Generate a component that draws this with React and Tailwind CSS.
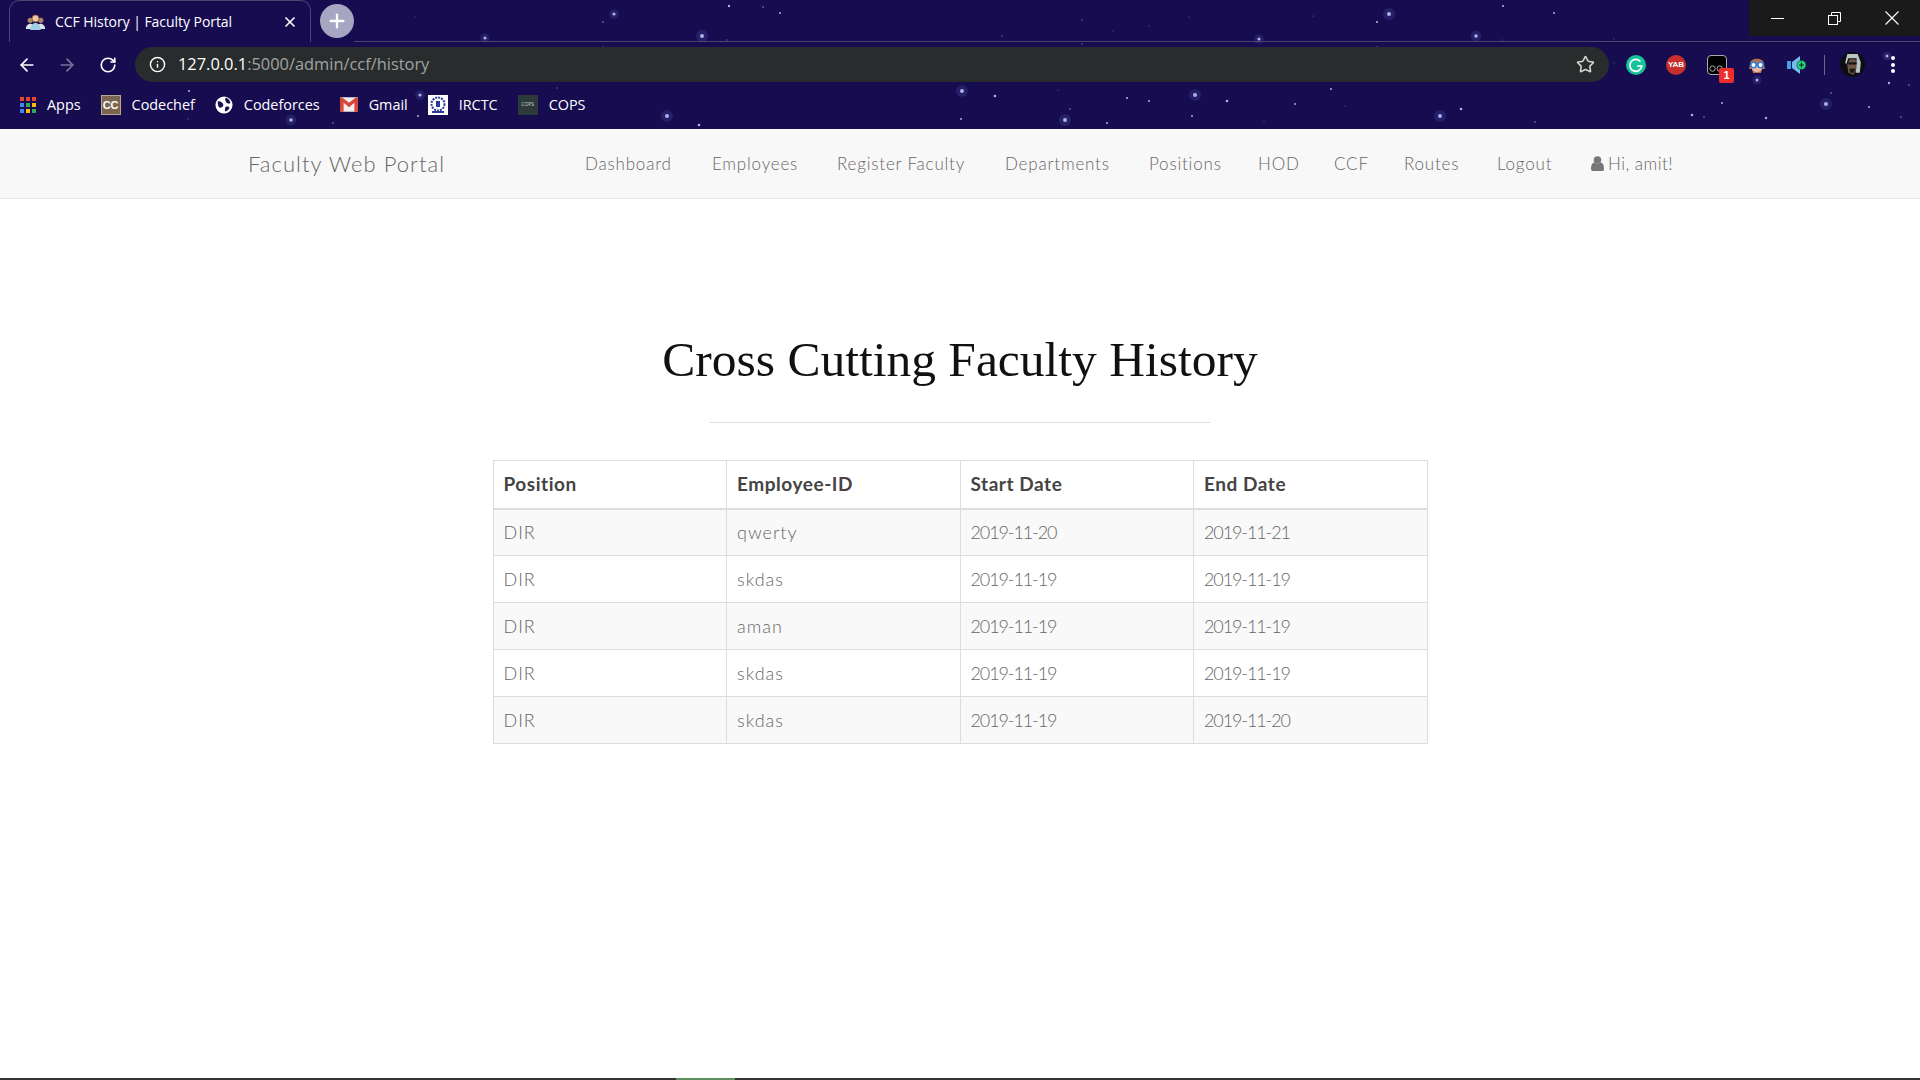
import { ArrowLeft, ArrowRight, RotateCw, Info, Star, X, Plus } from "lucide-react";

// [x, y, size] -- size 2 gets a glow
const stars = [
  [729, 6, 1.2], [763, 7, 0.9], [780, 13, 1], [702, 36, 2], [727, 40, 0.7], [1002, 36, 0.7], [1082, 20, 0.7], [1113, 31, 0.6],
  [1149, 26, 0.6], [1189, 17, 0.6], [1082, 44, 0.7], [962, 91, 2], [995, 96, 1.3], [1058, 90, 0.6], [1127, 98, 1.1], [1149, 101, 1],
  [1195, 95, 2], [667, 116, 2], [699, 125, 1.3], [961, 119, 1], [1065, 120, 2], [1070, 109, 0.9], [1107, 123, 1], [1192, 116, 1],
  [1389, 14, 2], [1377, 22, 1.1], [1313, 16, 0.6], [1503, 6, 1.1], [1554, 13, 1], [1259, 39, 1.6], [1476, 36, 1.8], [1377, 47, 0.8],
  [1502, 40, 0.6], [1614, 39, 0.6], [1614, 63, 0.6], [1331, 89, 1], [1227, 101, 1.3], [1295, 104, 1], [1345, 106, 0.6], [1440, 116, 2],
  [1461, 109, 1.3], [1264, 121, 0.6], [1535, 122, 0.9], [1692, 115, 1.3], [1704, 117, 0.9], [1722, 103, 1], [1757, 80, 1.5],
  [1887, 56, 1.5], [1889, 83, 1.2], [1909, 85, 0.9], [1831, 93, 0.9], [1826, 104, 2], [1869, 107, 1], [1901, 117, 0.9], [1766, 118, 1.2],
  [614, 14, 1.6], [603, 22, 0.9], [485, 38, 1.5], [415, 17, 0.6], [189, 91, 1.1], [420, 95, 1.6], [557, 88, 0.7], [291, 120, 1.8],
  [188, 119, 0.7], [333, 123, 0.9], [418, 116, 1], [603, 47, 0.7],
];

const bookmarks = ["Apps", "Codechef", "Codeforces", "Gmail", "IRCTC", "COPS"];

const navLinks = [
  ["Dashboard", "w-[127px]"],
  ["Employees", "w-[125px]"],
  ["Register Faculty", "w-[168px]"],
  ["Departments", "w-[144px]"],
  ["Positions", "w-[109px]"],
  ["HOD", "w-[76px]"],
  ["CCF", "w-[70px]"],
  ["Routes", "w-[93px]"],
  ["Logout", "w-[94px]"],
];

const rows = [
  ["DIR", "qwerty", "2019-11-20", "2019-11-21"],
  ["DIR", "skdas", "2019-11-19", "2019-11-19"],
  ["DIR", "aman", "2019-11-19", "2019-11-19"],
  ["DIR", "skdas", "2019-11-19", "2019-11-19"],
  ["DIR", "skdas", "2019-11-19", "2019-11-20"],
];

function BookmarkIcon({ label }) {
  if (label === "Apps") {
    const colors = ["#ea4335", "#ea4335", "#ea4335", "#4285f4", "#34a853", "#fbbc05", "#4285f4", "#fbbc05", "#34a853"];
    return (
      <svg viewBox="0 0 16 16" className="w-[16px] h-[16px]">
        {colors.map((c, i) => (
          <rect key={i} x={(i % 3) * 6} y={Math.floor(i / 3) * 6} width="4" height="4" fill={c} />
        ))}
      </svg>
    );
  }
  if (label === "Codechef") {
    return (
      <div className="w-[20px] h-[20px] bg-[#7a6650] flex items-center justify-center text-[11px] font-bold text-white border border-[#b8a78f] font-['Liberation_Sans',sans-serif]">
        CC
      </div>
    );
  }
  if (label === "Codeforces") {
    return (
      <svg viewBox="0 0 20 20" className="w-[18px] h-[18px]">
        <circle cx="10" cy="10" r="9.5" fill="#fff" />
        <path d="M3 6c3-1 5 1 6 3s-1 4-3 4-3-3-3-7zM12 2c3 1 5 3 5 6-2 1-4 0-5-2s-1-3 0-4zM12 12c2-1 4 0 4 1-1 3-3 4-5 4 0-2 0-4 1-5z" fill="#1a1050" />
      </svg>
    );
  }
  if (label === "Gmail") {
    return (
      <svg viewBox="0 0 20 16" className="w-[18px] h-[15px]">
        <rect width="20" height="16" rx="1" fill="#f1eeee" />
        <path d="M0 1v15h4V6l6 5 6-5v10h4V1l-2-1-8 6-8-6z" fill="#d8463a" />
      </svg>
    );
  }
  if (label === "IRCTC") {
    return (
      <svg viewBox="0 0 20 20" className="w-[20px] h-[20px]">
        <rect width="20" height="20" fill="#fff" />
        <circle cx="10" cy="9" r="6.5" fill="none" stroke="#2b3a9b" strokeWidth="2" strokeDasharray="2 1" />
        <rect x="8" y="6" width="4" height="6" fill="#2b3a9b" />
        <rect x="4" y="16" width="12" height="2" fill="#2b3a9b" />
      </svg>
    );
  }
  return (
    <div className="w-[20px] h-[20px] bg-[#2c3a3a] flex items-center justify-center text-[5px] text-gray-300">
      COPS
    </div>
  );
}

function ExtensionIcons() {
  return (
    <div className="flex items-center ml-[17px]">
      <svg viewBox="0 0 20 20" className="w-[20px] h-[20px]">
        <circle cx="10" cy="10" r="10" fill="#15c39a" />
        <path d="M14.5 6.5A6 6 0 1 0 15.8 11H11" fill="none" stroke="#fff" strokeWidth="1.7" />
      </svg>
      <div className="ml-[20px] w-[20px] h-[20px] rounded-full bg-[#c62f2b] flex items-center justify-center text-[8px] font-bold text-white font-['Liberation_Sans',sans-serif]">
        YAB
      </div>
      <div className="ml-[21px] relative w-[20px] h-[20px] rounded-[4px] bg-black border border-[#aaa]">
        <svg viewBox="0 0 20 20" className="absolute inset-0">
          <circle cx="5" cy="14" r="3" fill="none" stroke="#bbb" strokeWidth="1" />
          <circle cx="13" cy="14" r="3" fill="none" stroke="#bbb" strokeWidth="1" />
        </svg>
        <div className="absolute left-[11px] top-[12px] w-[15px] h-[15px] bg-[#ee2d2d] rounded-[2px] flex items-center justify-center text-[11px] font-bold text-white font-['Liberation_Sans',sans-serif]">
          1
        </div>
      </div>
      <svg viewBox="0 0 20 20" className="ml-[20px] w-[20px] h-[22px]">
        <path d="M3 9C3 2 17 2 17 9l1 5-3 0-1 4H6l-1-4-3 0z" fill="#b5714b" />
        <path d="M5 11h10v3c-1 4-9 4-10 0z" fill="#f2b9a0" />
        <circle cx="6.5" cy="10" r="2.7" fill="#fff" stroke="#2f80d8" strokeWidth="1.6" />
        <circle cx="13.5" cy="10" r="2.7" fill="#fff" stroke="#2f80d8" strokeWidth="1.6" />
      </svg>
      <svg viewBox="0 0 20 20" className="ml-[20px] w-[20px] h-[20px]">
        <rect x="0" y="6" width="4" height="8" fill="#39a3e6" />
        <path d="M5 7l8-6v18l-8-6z" fill="#6fbde8" />
        <circle cx="14.5" cy="10" r="4.5" fill="#22dd77" stroke="#123" strokeWidth="0.6" />
        <path d="M12 10h5M14.5 7.5v5" stroke="#123" strokeWidth="1.2" />
      </svg>
      <div className="ml-[17px] w-px h-[20px] bg-[#6b6788]" />
      <svg viewBox="0 0 24 24" className="ml-[15px] w-[25px] h-[25px]">
        <circle cx="12" cy="12" r="12" fill="#0c0c14" />
        <path d="M7 2h10l3 8-1 10H15l1-14H8l-2 6-1-2z" fill="#b9c6c4" />
        <path d="M9 7h6l1 8-3 7-5-2-1-7z" fill="#6d5546" />
        <rect x="8" y="10" width="8" height="2" fill="#111" />
        <path d="M9 16h6l-2 4h-3z" fill="#1c1612" />
      </svg>
      <div className="ml-[26px] flex flex-col gap-[2.5px]">
        <div className="w-[4px] h-[4px] rounded-full bg-white" />
        <div className="w-[4px] h-[4px] rounded-full bg-white" />
        <div className="w-[4px] h-[4px] rounded-full bg-white" />
      </div>
    </div>
  );
}

function WindowControls() {
  return (
    <div className="absolute right-0 top-0 flex h-[36px] w-[171px] bg-[#1a1a1a] text-white">
      <div className="flex-1 flex items-center justify-center">
        <svg width="13" height="1"><rect width="13" height="1" fill="#fff" /></svg>
      </div>
      <div className="w-[58px] flex items-center justify-center">
        <svg width="13" height="13" fill="none" stroke="#fff">
          <path d="M3.5 3V.5h9v9H10" />
          <rect x=".5" y="3.5" width="9" height="9" />
        </svg>
      </div>
      <div className="flex-1 flex items-center justify-center">
        <svg width="14" height="14" stroke="#fff" strokeWidth="1.1">
          <path d="M.5.5l13 13M13.5.5l-13 13" />
        </svg>
      </div>
    </div>
  );
}

function BrowserChrome() {
  return (
    <div className="relative h-[129px] bg-[#170c50] text-white overflow-hidden font-['Open_Sans',sans-serif]">
      <svg className="absolute inset-0 w-full h-full" viewBox="0 0 1920 129">
        {stars.map(([x, y, r], i) => (
          <g key={i}>
            {r >= 1.5 && <circle cx={x} cy={y} r={r * 3} fill="#5f6bd0" opacity="0.2" />}
            <circle cx={x} cy={y} r={r} fill="#c5caf5" opacity={r < 1 ? 0.45 : 0.85} />
          </g>
        ))}
      </svg>

      <div className="relative flex h-[42px] items-start">
        <div className="ml-[9px] w-[302px] h-[42px] border border-b-0 border-[#4b4570] rounded-t-[10px] bg-[#170c50] flex items-center pl-[15px] pr-[12px]">
          <svg viewBox="0 0 24 20" className="w-[21px] h-[18px]">
            <circle cx="6" cy="8" r="3" fill="#b08868" />
            <circle cx="18" cy="8" r="3" fill="#b08868" />
            <path d="M1 18c0-5 4-6 5-6s5 1 5 6zM13 18c0-5 4-6 5-6s5 1 5 6z" fill="#dfe6ea" />
            <circle cx="12" cy="6" r="4" fill="#f0c8a8" stroke="#8a5a3c" />
            <path d="M6 19c0-6 4-8 6-8s6 2 6 8z" fill="#9fd0e8" />
          </svg>
          <span className="ml-[9px] text-[14px] leading-none whitespace-nowrap tracking-[-0.05px]">CCF History | Faculty Portal</span>
          <X size={16} strokeWidth={2.5} className="ml-auto" />
        </div>
        <div className="mt-[4px] ml-[9px] w-[34px] h-[34px] rounded-full bg-[#a6a6c2] flex items-center justify-center">
          <Plus size={22} strokeWidth={2.5} />
        </div>
        <div className="flex-1 mt-[41px] h-px bg-[#4b4570]" />
        <WindowControls />
      </div>

      <div className="relative flex items-center h-[43px] mt-px">
        <ArrowLeft size={20} className="ml-[17px]" />
        <ArrowRight size={20} className="ml-[20px] text-[#7a7598]" />
        <RotateCw size={18} strokeWidth={2.2} className="ml-[22px]" />
        <div className="ml-[18px] w-[1474px] h-[35px] rounded-full bg-[#282c2c] flex items-center pl-[14px] pr-[14px]">
          <Info size={17} />
          <span className="ml-[12px] text-[16.4px] text-white">
            127.0.0.1<span className="text-[#a0a4a4]">:5000/admin/ccf/history</span>
          </span>
          <Star size={19} className="ml-auto text-[#d6d6d6]" />
        </div>
        <ExtensionIcons />
      </div>

      <div className="relative flex items-center h-[38px] pl-[20px] gap-[20px] text-[14.4px]">
        {bookmarks.map((b) => (
          <div key={b} className="flex items-center gap-[11px]">
            <BookmarkIcon label={b} />
            <span>{b}</span>
          </div>
        ))}
      </div>
    </div>
  );
}

export default function App() {
  return (
    <div className="relative min-h-[1080px] bg-white font-['Lato',sans-serif] overflow-hidden">
      <BrowserChrome />

      <nav className="h-[70px] bg-[#f8f8f8] border-b border-[#e7e7e7] flex items-center pl-[248px] text-[#666] font-light">
        <span className="w-[337px] text-[22px] tracking-[1.05px]">Faculty Web Portal</span>
        <div className="flex items-center text-[17px] tracking-[0.8px]">
          {navLinks.map(([name, w]) => (
            <span key={name} className={`${w} whitespace-nowrap`}>{name}</span>
          ))}
          <span className="flex items-center gap-[4px] whitespace-nowrap tracking-[0.5px]">
            <svg viewBox="0 0 13 15" className="w-[13px] h-[15px]" fill="#777">
              <circle cx="6.5" cy="4" r="3.8" />
              <path d="M0 13c0-4 1-6 3-6.500 2 1.500 5 1.500 7 0 2 .5 3 2.500 3 6.500 0 1.500-1 2-2 2H2c-1 0-2-.5-2-2z" />
            </svg>
            Hi, amit!
          </span>
        </div>
      </nav>

      <main className="flex flex-col items-center">
        <h1 className="mt-[129px] text-[49.5px] leading-[64px] text-[#111] font-['Liberation_Serif',serif]">
          Cross Cutting Faculty History
        </h1>
        <div className="mt-[30px] w-[500px] h-px bg-[#ddd]" />
        <table className="mt-[37px] w-[935px] table-fixed border-collapse text-[18px] text-[#666] font-light">
          <thead>
            <tr className="h-[48px] text-left text-[#444] text-[19px] tracking-[0.55px]">
              {["Position", "Employee-ID", "Start Date", "End Date"].map((h) => (
                <th key={h} className="border border-b-2 border-[#ddd] px-[10px] font-bold">{h}</th>
              ))}
            </tr>
          </thead>
          <tbody>
            {rows.map((row, i) => (
              <tr key={i} className={`h-[47px] ${i % 2 === 0 ? "bg-[#f9f9f9]" : "bg-white"}`}>
                {row.map((cell, j) => (
                  <td key={j} className={`border border-[#ddd] px-[10px] ${j > 1 ? "tracking-[-1.1px]" : "tracking-[1px]"}`}>{cell}</td>
                ))}
              </tr>
            ))}
          </tbody>
        </table>
      </main>

      <div className="absolute left-0 right-0 bottom-0 h-[2px] bg-[#333] flex">
        <div className="ml-[676px] w-[59px] h-full bg-[#5f9060]" />
      </div>
    </div>
  );
}
